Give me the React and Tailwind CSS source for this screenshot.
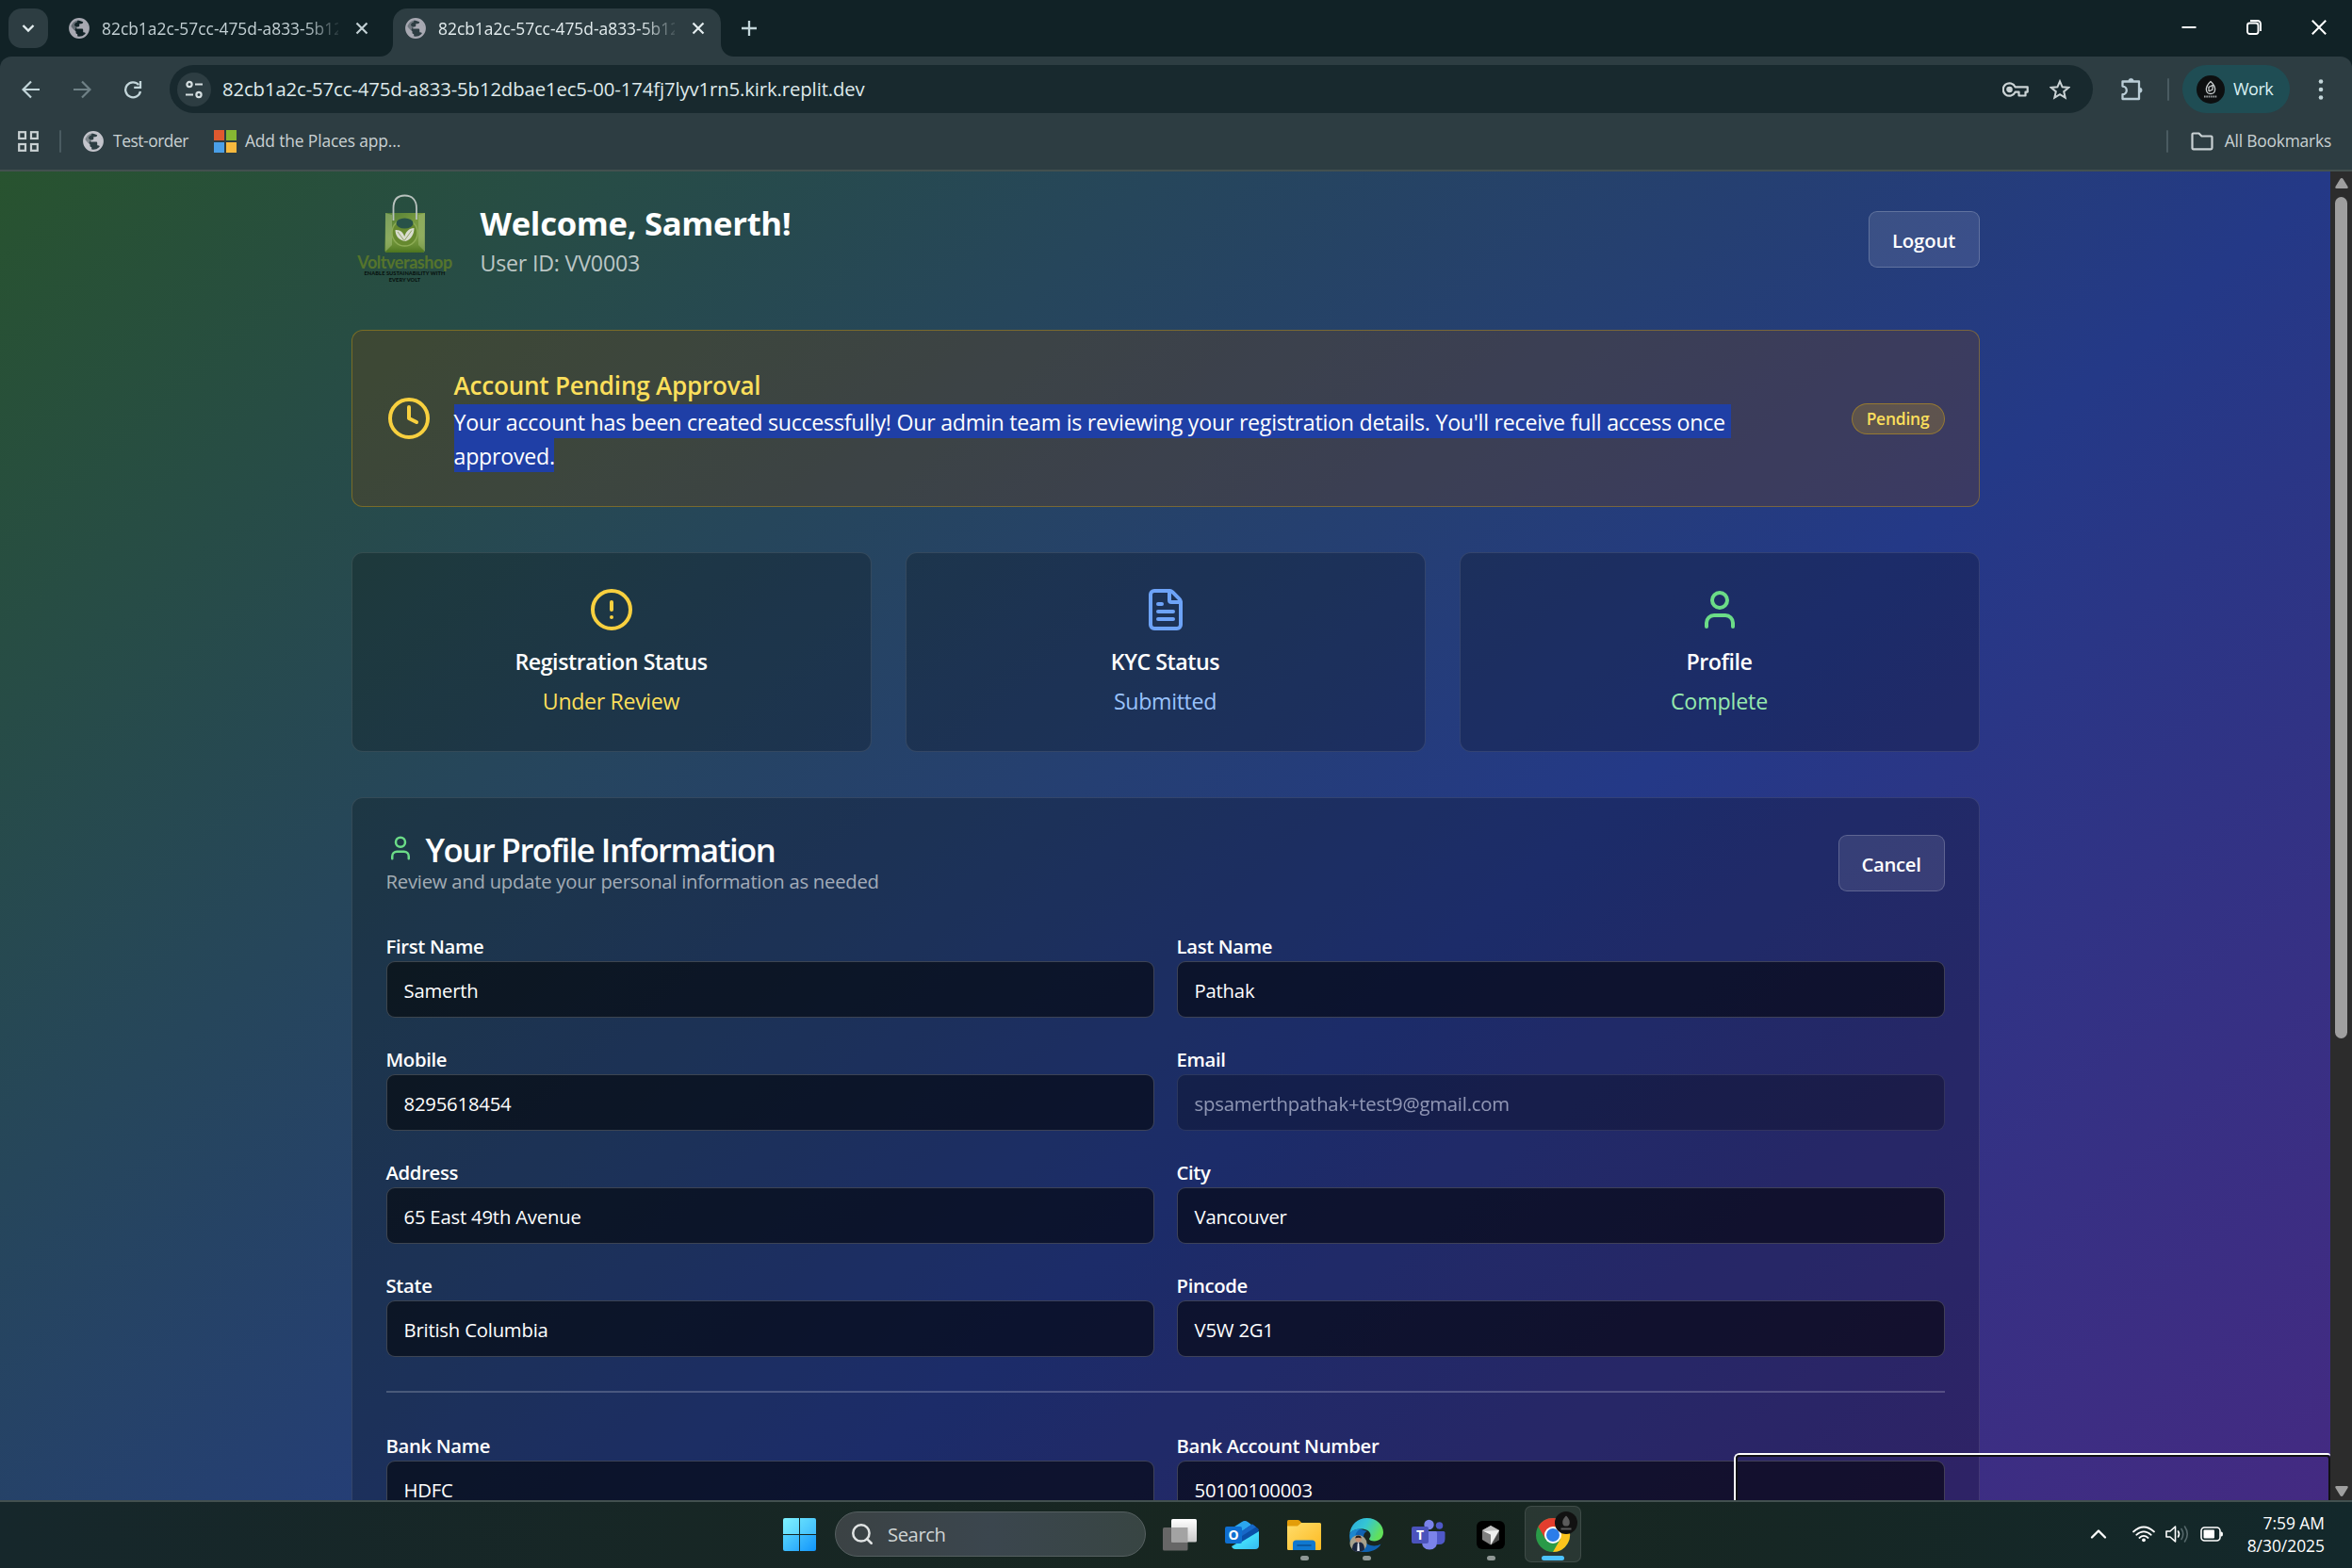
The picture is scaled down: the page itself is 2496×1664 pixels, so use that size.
import React from "react";
import { Clock, CircleAlert, FileText, User, Search, ChevronUp } from "lucide-react";

/* ---------- browser icons ---------- */

function Globe({ className = "" }) {
  return (
    <svg viewBox="0 0 22 22" className={`h-[22px] w-[22px] shrink-0 ${className}`}>
      <circle cx="11" cy="11" r="9.8" fill="none" stroke="currentColor" strokeWidth="2.2" />
      <path
        fill="currentColor"
        d="M2 9 L7.5 14.2 V15.6 C7.5 16.6 8.3 17.2 9.2 17.2 V20 C4.5 19.6 1 15.500 1 11 Z M9 2 C13 1 17 3 19 6.500 C21 10 20.500 14 18.500 17 C18 16 17 15.300 16 15.300 H15.200 V12.700 C15.200 12 14.700 11.600 14 11.600 H8.300 V9.400 H10.200 C10.800 9.400 11.300 8.900 11.300 8.300 V6.300 H13.200 C14.300 6.300 15.200 5.400 15.200 4.300 Z"
      />
      <path fill="currentColor" d="M1.500 9.500 C2 5 5.500 1.800 9.500 1.400 L9 4.500 C7 5 6 6 6 8 L8 9.500 L6.500 13 Z" opacity=".55" />
    </svg>
  );
}

function CloseX({ className = "" }) {
  return (
    <svg viewBox="0 0 14 14" className={`h-[14px] w-[14px] ${className}`} stroke="currentColor" strokeWidth="2.2" fill="none">
      <path d="M1.500 1.500 12.500 12.500M12.500 1.500 1.500 12.500" />
    </svg>
  );
}

function TabTitle({ className = "" }) {
  return (
    <span
      className={`ml-[13px] w-[251px] overflow-hidden whitespace-nowrap text-[17.4px] leading-[24px] [mask-image:linear-gradient(to_right,black_86%,transparent_102%)] ${className}`}
    >
      82cb1a2c-57cc-475d-a833-5b12
    </span>
  );
}

function TabStrip() {
  return (
    <div className="flex h-[60px] bg-[#112226] text-[#c3d0d4]">
      <div className="ml-[9px] mt-[9px] flex h-[42px] w-[42px] items-center justify-center rounded-[14px] bg-[#2d3d42]">
        <svg viewBox="0 0 14 10" className="h-[10px] w-[14px]" fill="none" stroke="#e4eef0" strokeWidth="2.4">
          <path d="M1.500 2 7 7.500 12.500 2" />
        </svg>
      </div>
      <div className="ml-[22px] flex h-[60px] w-[330px] items-center">
        <Globe className="text-[#a8a9b2]" />
        <TabTitle />
        <CloseX className="ml-[18px]" />
      </div>
      <svg viewBox="0 0 14 14" className="h-[14px] w-[14px] self-end fill-[#2d3d42]">
        <path d="M14 0V14H0C8 14 14 8 14 0Z" />
      </svg>
      <div className="mt-[9px] flex h-[51px] w-[348px] items-center rounded-t-[15px] bg-[#2d3d42] pb-[9px] pl-[13px] text-[#e3ecee]">
        <Globe className="text-[#a8a9b2]" />
        <TabTitle />
        <CloseX className="ml-[18px]" />
      </div>
      <svg viewBox="0 0 14 14" className="h-[14px] w-[14px] self-end fill-[#2d3d42]">
        <path d="M0 0V14H14C6 14 0 8 0 0Z" />
      </svg>
      <svg viewBox="0 0 16 16" className="ml-[8px] mt-[22px] h-[16px] w-[16px]" stroke="#c3d6da" strokeWidth="2.300">
        <path d="M8 0V16M0 8H16" />
      </svg>
      <div className="ml-auto mr-[27px] flex h-[58px] items-center gap-[53px] text-white">
        <svg viewBox="0 0 16 16" className="h-[16px] w-[16px]" stroke="currentColor" strokeWidth="2">
          <path d="M0.500 8H15.500" />
        </svg>
        <svg viewBox="0 0 16 16" className="h-[16px] w-[16px]" fill="none" stroke="currentColor" strokeWidth="1.900">
          <rect x="1" y="3.500" width="11.500" height="11.500" rx="2.500" />
          <path d="M4 1H11.500Q15 1 15 4.500V12" />
        </svg>
        <svg viewBox="0 0 16 16" className="h-[16px] w-[16px]" stroke="currentColor" strokeWidth="2">
          <path d="M0.800 0.800 15.200 15.200M15.200 0.800 0.800 15.200" />
        </svg>
      </div>
    </div>
  );
}

function Toolbar() {
  return (
    <div className="bg-[#112226]">
      <div className="flex h-[69px] items-center rounded-t-[12px] bg-[#2d3d42] text-[#c3d6da]">
        <svg viewBox="0 0 20 20" className="ml-[23px] h-[20px] w-[20px]" fill="none" stroke="currentColor" strokeWidth="2.200">
          <path d="M19 10H2M10 1.500 1.500 10 10 18.500" />
        </svg>
        <svg viewBox="0 0 20 20" className="ml-[34px] h-[20px] w-[20px] text-[#6f8186]" fill="none" stroke="currentColor" strokeWidth="2.200">
          <path d="M1 10H18M10 1.500 18.500 10 10 18.500" />
        </svg>
        <svg viewBox="0 0 20 20" className="ml-[34px] h-[20px] w-[20px]" fill="none" stroke="currentColor" strokeWidth="2.300">
          <path d="M16.200 5A8 8 0 1 0 18 12" />
          <path d="M18 1V7.800H11.200" />
        </svg>
        <div className="ml-[29px] flex h-[51px] w-[2041px] items-center rounded-full bg-[#18292e]">
          <div className="ml-[8px] flex h-[36px] w-[36px] items-center justify-center rounded-full bg-[#2d3d42]">
            <svg viewBox="0 0 20 20" className="h-[20px] w-[20px]" fill="none" stroke="#d5dee0" strokeWidth="2.200">
              <circle cx="5" cy="4.500" r="2.600" />
              <path d="M11 4.500H19M1 15.500H9" />
              <circle cx="15" cy="15.500" r="2.600" />
            </svg>
          </div>
          <span className="mb-[2px] ml-[12px] whitespace-nowrap text-[20.3px] leading-[30px] tracking-[-0.1px] text-[#dfe9eb]">
            82cb1a2c-57cc-475d-a833-5b12dbae1ec5-00-174fj7lyv1rn5.kirk.replit.dev
          </span>
          <svg viewBox="0 0 28 16" className="ml-auto mr-[22px] h-[16px] w-[28px]" fill="none" stroke="#cbd3d5" strokeWidth="2.200">
            <path d="M13.600 5.400A6.700 6.700 0 1 0 13.600 10.600H17.500V14.500H24.500V10.600H26.700V5.400Z" strokeLinejoin="round" />
            <circle cx="7.500" cy="8" r="2.200" fill="#cbd3d5" />
          </svg>
          <svg viewBox="0 0 22 22" className="mr-[24px] h-[22px] w-[22px]" fill="none" stroke="#cbd3d5" strokeWidth="2">
            <path d="M11 2.300 13.600 8.300 20.200 8.900 15.200 13.200 16.700 19.600 11 16.200 5.300 19.600 6.800 13.200 1.800 8.900 8.400 8.300Z" />
          </svg>
        </div>
        <svg viewBox="0 0 26 26" className="-mt-[2px] ml-[28px] h-[26px] w-[26px]" fill="none" stroke="#b9cdd6" strokeWidth="2.300" strokeLinejoin="round">
          <path d="M3.500 5.500H21V24H3.500V19.200A4.300 4.300 0 0 0 3.500 10.600Z" />
          <path d="M9.800 5A2.700 2.700 0 0 1 15.200 5ZM21.500 12A2.700 2.700 0 0 1 21.500 17.400Z" fill="#b9cdd6" strokeWidth="0.500" />
        </svg>
        <div className="ml-[25px] h-[24px] w-[2px] rounded bg-[#4a5b61]" />
        <div className="ml-[14px] flex h-[51px] w-[114px] items-center rounded-full bg-[#1f4d54]">
          <svg viewBox="0 0 30 30" className="ml-[15px] h-[30px] w-[30px]">
            <circle cx="15" cy="15" r="15" fill="#0d0f10" />
            <path d="M15 6.500C11 10 10 13 10.500 16S13 19.500 15 19.500 19 19 19.500 16 19 10 15 6.500ZM13 17V12.500L17 10.500V15L13 17" fill="none" stroke="#c9cdce" strokeWidth="1.300" />
            <path d="M8 22.500H22" stroke="#9b9fa0" strokeWidth="2" strokeDasharray="1.600 .7" />
          </svg>
          <span className="mb-px ml-[9px] text-[18px] leading-[28px] tracking-[-0.5px] text-[#d9f0f3]">Work</span>
        </div>
        <svg viewBox="0 0 6 22" className="ml-[30px] h-[22px] w-[6px] fill-[#c3d6da]">
          <circle cx="3" cy="2.500" r="2.300" />
          <circle cx="3" cy="11" r="2.300" />
          <circle cx="3" cy="19.500" r="2.300" />
        </svg>
      </div>
    </div>
  );
}

function BookmarksBar() {
  return (
    <div className="flex h-[53px] items-center border-b-2 border-[#43504f] bg-[#2d3d42] pb-[9px] text-[17.4px] leading-[24px] text-[#c9d1d3]">
      <svg viewBox="0 0 22 22" className="ml-[19px] h-[22px] w-[22px]" fill="none" stroke="#c9d1d3" strokeWidth="2.200">
        <rect x="1.200" y="1.200" width="6.800" height="6.800" />
        <rect x="14" y="1.200" width="6.800" height="6.800" />
        <rect x="1.200" y="14" width="6.800" height="6.800" />
        <rect x="14" y="14" width="6.800" height="6.800" />
      </svg>
      <div className="ml-[22px] h-[24px] w-[2px] rounded bg-[#4a5b61]" />
      <Globe className="ml-[23px] text-[#c3c4cb]" />
      <span className="mb-[2px] ml-[10px] w-[81px] whitespace-nowrap tracking-[-0.45px]">Test-order</span>
      <div className="ml-[26px] grid h-[24px] w-[24px] grid-cols-2 gap-[2px]">
        <div className="bg-[#e0592f]" />
        <div className="bg-[#86b732]" />
        <div className="bg-[#4a9fe8]" />
        <div className="bg-[#f7b93e]" />
      </div>
      <span className="mb-[2px] ml-[9px] whitespace-nowrap tracking-[-0.14px]">Add the Places app...</span>
      <div className="ml-auto h-[24px] w-[2px] rounded bg-[#4a5b61]" />
      <svg viewBox="0 0 24 20" className="ml-[24px] h-[20px] w-[24px]" fill="none" stroke="#c9d1d3" strokeWidth="2.200" strokeLinejoin="round">
        <path d="M1.500 17V2.500Q1.500 1.500 2.500 1.500H8.500L11.500 4.500H21.500Q22.500 4.500 22.500 5.500V17Q22.500 18.300 21.200 18.300H2.800Q1.500 18.300 1.500 17Z" />
      </svg>
      <span className="mb-[2px] ml-[12px] mr-[22px] whitespace-nowrap tracking-[-0.2px]">All Bookmarks</span>
    </div>
  );
}

/* ---------- page ---------- */

function ShopLogo() {
  return (
    <div className="flex h-[96px] w-[114px] flex-col items-center">
      <svg viewBox="0 0 46 64" className="h-[64px] w-[46px]">
        <defs>
          <linearGradient id="bag" x1="0" y1="0" x2="1" y2="1">
            <stop offset="0" stopColor="#4d7a35" />
            <stop offset=".45" stopColor="#76993f" />
            <stop offset="1" stopColor="#7d9d48" />
          </linearGradient>
          <linearGradient id="bagBase" x1="0" y1="0" x2="0" y2="1">
            <stop offset="0" stopColor="#6d9434" stopOpacity="0" />
            <stop offset="1" stopColor="#4c741e" />
          </linearGradient>
        </defs>
        <path d="M2 20H44L43.500 60Q43.500 62 41.500 62H3.500Q1.500 62 1.500 60Z" fill="url(#bag)" />
        <path d="M2 44H44L43.500 60Q43.500 62 41.500 62H3.500Q1.500 62 1.500 60Z" fill="url(#bagBase)" />
        <path d="M2 61 9 54V22L2 20Z" fill="#b9cf95" opacity=".4" />
        <path d="M44 61 37 54V22L44 20Z" fill="#c3d6a0" opacity=".3" />
        <ellipse cx="22.500" cy="41" rx="13.500" ry="14" fill="#66892f" stroke="#8dac55" strokeWidth="1.500" />
        <ellipse cx="22.500" cy="31" rx="9" ry="5.500" fill="#285248" />
        <path d="M22 50C15 48 12.500 43 12.500 38 18 37.500 21 41 22.300 45 23.500 40 27 36 32.500 36 32.500 43 29 48.500 23 50Z" fill="#d9dccf" />
        <path d="M15 40 22 49.500 30 38.500" fill="none" stroke="#8ba05f" strokeWidth=".9" />
        <path d="M10.500 28V15C10.500 6 15 1.500 22.500 1.500S35 6 35 15V27" fill="none" stroke="#b9c2be" strokeWidth="1.800" />
      </svg>
      <span className="mt-[-2px] whitespace-nowrap font-['Lato'] text-[18px] font-bold leading-[20px] tracking-[-0.450px] text-[#55742c]">
        Voltverashop
      </span>
      <span className="mt-[-1px] whitespace-nowrap text-center font-['Lato'] text-[5.600px] font-black leading-[6.500px] tracking-[0.100px] text-[#07120f]">
        ENABLE SUSTAINABILITY WITH
        <br />
        EVERY VOLT
      </span>
    </div>
  );
}

function StatusCard({ icon: Icon, iconClass, title, titleClass, status, statusClass }) {
  return (
    <div className="flex h-[212px] flex-col items-center rounded-xl border border-white/10 bg-black/22 pt-9">
      <Icon className={`h-12 w-12 ${iconClass}`} strokeWidth={2} />
      <h3 className={`mt-[13px] text-[23.200px] font-semibold leading-[36px] text-white ${titleClass}`}>{title}</h3>
      <p className={`mt-[6px] text-[23.200px] leading-[36px] ${statusClass}`}>{status}</p>
    </div>
  );
}

function Field({ label, value, disabled }) {
  return (
    <div>
      <div className="h-9 whitespace-nowrap pt-[2px] text-[20.300px] font-semibold leading-[36px] tracking-[-0.330px] text-white">{label}</div>
      <div
        className={`flex h-[60px] items-center whitespace-nowrap rounded-[9px] border border-white/20 bg-black/55 px-[18px] pt-[2px] text-[20.300px] leading-[30px] tracking-[-0.200px] text-white ${disabled ? "opacity-50" : ""}`}
      >
        {value}
      </div>
    </div>
  );
}

const fields = [
  ["First Name", "Samerth"],
  ["Last Name", "Pathak"],
  ["Mobile", "8295618454"],
  ["Email", "spsamerthpathak+test9@gmail.com", true],
  ["Address", "65 East 49th Avenue"],
  ["City", "Vancouver"],
  ["State", "British Columbia"],
  ["Pincode", "V5W 2G1"],
];

const bankFields = [
  ["Bank Name", "HDFC"],
  ["Bank Account Number", "50100100003"],
];

function FieldGrid({ items }) {
  return (
    <div className="grid grid-cols-2 gap-6">
      {items.map(([label, value, disabled]) => (
        <Field key={label} label={label} value={value} disabled={disabled} />
      ))}
    </div>
  );
}

function Page() {
  return (
    <div className="relative flex min-h-0 flex-1 overflow-hidden">
      <main className="h-[2170px] w-[2473px] shrink-0 bg-linear-to-br/srgb from-[#28532f] via-[#243987] to-[#55227f] pt-6">
        <div className="mx-auto w-[1728px]">
          <header className="flex items-center justify-between">
            <div className="flex items-center gap-[23px]">
              <ShopLogo />
              <div className="pt-[1px]">
                <h1 className="text-[34.700px] font-bold leading-[48px] tracking-[-0.330px] text-white">Welcome, Samerth!</h1>
                <p className="text-[23.200px] leading-[36px] tracking-[-0.200px] text-white/70">User ID: VV0003</p>
              </div>
            </div>
            <button className="flex h-[60px] w-[118px] items-center justify-center rounded-[9px] border border-white/20 bg-white/10 pt-[2px] text-[20.300px] font-semibold tracking-[-0.150px] text-white">
              Logout
            </button>
          </header>

          <section className="mt-12 flex h-[188px] items-center rounded-xl border border-[#eab308]/35 bg-[#713f12]/30 px-9">
            <Clock className="h-12 w-12 shrink-0 text-[#f8d03f]" strokeWidth={2} />
            <div className="ml-6 w-[1400px]">
              <h2 className="h-[42px] pt-[1px] text-[26.100px] font-semibold leading-[42px] tracking-[-0.240px] text-[#fbdf5b]">
                Account Pending Approval
              </h2>
              <p className="h-[72px] whitespace-nowrap text-[23.200px] leading-[36px] tracking-[-0.255px] text-white">
                <span className="block h-[36px] w-[1355px] bg-[#1f3fa6] pt-px">
                  Your account has been created successfully! Our admin team is reviewing your registration details. You'll receive full access once
                </span>
                <span className="block h-[36px] w-[106px] bg-[#1f3fa6] pt-px">approved.</span>
              </p>
            </div>
            <span className="ml-auto flex h-[33px] w-[99px] items-center justify-center rounded-full border border-[#eab308]/40 bg-[#eab308]/20 pt-px text-[17.400px] font-semibold tracking-[-0.200px] text-[#fbdf5b]">
              Pending
            </span>
          </section>

          <section className="mt-12 grid grid-cols-3 gap-9">
            <StatusCard
              icon={CircleAlert}
              iconClass="text-[#f8d03f]"
              title="Registration Status"
              titleClass="tracking-[-0.440px]"
              status="Under Review"
              statusClass="tracking-[-0.360px] text-[#fbdf5b]"
            />
            <StatusCard
              icon={FileText}
              iconClass="text-[#6da3f8]"
              title="KYC Status"
              titleClass="tracking-[-0.440px]"
              status="Submitted"
              statusClass="tracking-[-0.360px] text-[#99c2fb]"
            />
            <StatusCard
              icon={User}
              iconClass="text-[#6bdc87]"
              title="Profile"
              titleClass="tracking-[-0.440px]"
              status="Complete"
              statusClass="tracking-[-0.150px] text-[#95e9ae]"
            />
          </section>

          <section className="mt-12 h-[1100px] rounded-xl border border-white/10 bg-black/22 px-9 pt-9">
            <div className="flex h-[67px] items-center justify-between">
              <div>
                <div className="flex items-center gap-3">
                  <User className="-mt-[4px] h-[30px] w-[30px] text-[#6bdc87]" strokeWidth={2} />
                  <h2 className="text-[34.700px] font-semibold leading-[36px] tracking-[-1.520px] text-white">Your Profile Information</h2>
                </div>
                <p className="text-[20.300px] leading-[30px] tracking-[-0.250px] text-white/60">
                  Review and update your personal information as needed
                </p>
              </div>
              <button className="mb-px flex h-[60px] w-[113px] items-center justify-center rounded-[9px] border border-white/20 bg-white/10 pt-[2px] text-[20.300px] font-semibold tracking-[-0.300px] text-white">
                Cancel
              </button>
            </div>
            <div className="mt-[34px]">
              <FieldGrid items={fields} />
            </div>
            <div className="my-9 h-[2px] bg-white/20" />
            <FieldGrid items={bankFields} />
          </section>
        </div>
      </main>

      <div className="flex w-[23px] flex-col items-center bg-[#2c2c2c]">
        <svg viewBox="0 0 14 11" className="mt-[7px] h-[11px] w-[14px] shrink-0 fill-[#9f9f9f]">
          <path d="M7 0Q8 0 8.600 1L13.500 9Q14.300 11 12.500 11H1.500Q-.3 11 .5 9L5.400 1Q6 0 7 0Z" />
        </svg>
        <div className="mt-[9px] h-[893px] w-[13px] shrink-0 rounded-full bg-[#9f9f9f]" />
        <svg viewBox="0 0 14 11" className="mb-[4px] mt-auto h-[11px] w-[14px] shrink-0 rotate-180 fill-[#9f9f9f]">
          <path d="M7 0Q8 0 8.600 1L13.500 9Q14.300 11 12.500 11H1.500Q-.3 11 .5 9L5.400 1Q6 0 7 0Z" />
        </svg>
      </div>

      {/* focus frame hanging over the lower right corner of the page */}
      <div className="absolute -bottom-4 left-[1840px] h-[66px] w-[633px] rounded-tl-[6px] rounded-tr-[3px] border-l-2 border-t-2 border-white">
        <div className="h-full w-full rounded-[4px] border-2 border-[#111114]" />
      </div>
    </div>
  );
}

/* ---------- taskbar ---------- */

function TaskItem({ children, running, active }) {
  return (
    <div className="flex h-full w-[66px] justify-center">
      <div
        className={`mt-[4px] flex h-[60px] w-[60px] flex-col items-center rounded-[7px] border pt-[11px] ${active ? "border-white/10 bg-white/8" : "border-transparent"}`}
      >
        <div className="flex h-[37px] items-center">{children}</div>
        {running && <div className="mt-[4px] h-[5px] w-[9px] rounded-full bg-[#8f9795]" />}
        {active && <div className="mt-[4px] h-[5px] w-[24px] rounded-full bg-[#4cc2ff]" />}
      </div>
    </div>
  );
}

function TaskViewIcon() {
  return (
    <svg viewBox="0 0 36 36" className="h-9 w-9">
      <defs>
        <linearGradient id="tvA" x1="0" y1="0" x2="0" y2="1">
          <stop offset="0" stopColor="#fff" />
          <stop offset="1" stopColor="#c9c9c9" />
        </linearGradient>
      </defs>
      <rect x="0" y="10" width="26.500" height="24.500" rx="1.500" fill="#666" />
      <rect x="9" y="1" width="27" height="24.500" rx="1.500" fill="url(#tvA)" />
      <rect x="9" y="10" width="17.500" height="15.500" fill="#a3a3a3" />
    </svg>
  );
}

function OutlookIcon() {
  return (
    <svg viewBox="0 0 36 36" className="h-9 w-9">
      <defs>
        <linearGradient id="olA" x1="0" y1="0" x2="1" y2="1">
          <stop offset="0" stopColor="#1a8fe0" />
          <stop offset=".5" stopColor="#42dcfb" />
          <stop offset="1" stopColor="#35b8f1" />
        </linearGradient>
      </defs>
      <path d="M7 14 19 4Q21 2.500 23 4L35 12V20H7Z" fill="#1470cc" />
      <path d="M7 11 18 4Q21 2 24 4L28 7 12 18H7Z" fill="#2ba6ee" />
      <path d="M36 14V29Q36 33 32 33H11Q8 33 7 30L29 17Z" fill="url(#olA)" />
      <path d="M29 6.500 35 11Q37 13 34.500 15L18 25V14Z" fill="#0a4fa8" />
      <path d="M18 14 29 6.500 33 9.500 18 19Z" fill="#1768c8" />
      <rect x="0" y="9" width="18" height="18" rx="2" fill="#0f6fd0" />
      <text x="9" y="23.300" textAnchor="middle" fontSize="14" fontWeight="700" fontFamily="Open Sans, sans-serif" fill="#fff">O</text>
    </svg>
  );
}

function FolderIcon() {
  return (
    <svg viewBox="0 0 36 36" className="h-9 w-9">
      <defs>
        <linearGradient id="fdA" x1="0" y1="0" x2="1" y2="1">
          <stop offset="0" stopColor="#ffdd6b" />
          <stop offset="1" stopColor="#fdba22" />
        </linearGradient>
      </defs>
      <path d="M0 3.500Q0 2 1.500 2H11Q12.500 2 13.500 3L16 6V12H0Z" fill="#e39d0a" />
      <path d="M0 8.500H11L15 5H34.500Q36 5 36 6.500V32.500Q36 34 34.500 34H1.500Q0 34 0 32.500Z" fill="url(#fdA)" />
      <path d="M6 34V27Q6 23.500 9.500 23.500H26.500Q30 23.500 30 27V34Z" fill="#0f78d0" />
      <path d="M11 29H25" stroke="#0a4f92" strokeWidth="1.600" strokeLinecap="round" />
    </svg>
  );
}

function EdgeIcon() {
  return (
    <svg viewBox="0 0 36 36" className="h-9 w-9">
      <defs>
        <linearGradient id="egA" x1="0" y1="0" x2="1" y2=".4">
          <stop offset="0" stopColor="#2aa7dd" />
          <stop offset=".5" stopColor="#35c6d4" />
          <stop offset="1" stopColor="#62e05a" />
        </linearGradient>
      </defs>
      <path d="M1 22C-1 32 8 37 18 36 26 35.500 31 32 33.500 27.500 28 31 18 30 15.500 23 14 18 16 15 19 14L10 11Q3 13 1 22Z" fill="#0f62b2" />
      <path d="M.3 17C1 7 9 0 18.500 0 29 0 36 7.500 36 15 36 21 31.500 24.500 26.500 24.500 23 24.500 21 23.500 21 22.300 21 21.500 22.500 20.500 22.500 18.300 22.500 14 18 11.500 12.500 11.500 6 11.500 1.500 14 .3 17Z" fill="url(#egA)" />
      <path d="M.3 17C2 13 6.500 11.500 12 11.500 7 14 5.500 18 6.500 24L.8 24Q-.2 20 .3 17Z" fill="#1c86cf" />
      <circle cx="9.500" cy="27" r="9" fill="#a6a18d" />
      <path d="M3 33.500C3 27 6 25.500 9.500 25.500S16 27 16 33.500Q13 36 9.500 36T3 33.500Z" fill="#1c2740" />
      <path d="M9.500 27 8 25.500H11ZM8.700 27H10.300L10.800 35H8.200Z" fill="#e8ecf2" />
      <circle cx="9.500" cy="22.300" r="3.200" fill="#c48f73" />
      <path d="M6.300 21.500Q6.500 18.500 9.500 18.500T12.700 21.500Q9.500 19.800 6.300 21.500Z" fill="#241a17" />
    </svg>
  );
}

function TeamsIcon() {
  return (
    <svg viewBox="0 0 36 36" className="h-9 w-9">
      <circle cx="29.500" cy="8" r="3.800" fill="#4f58c8" />
      <path d="M25 14H34Q35.500 14 35.500 15.500V22Q35.500 28 29 28H25Z" fill="#4f58c8" />
      <circle cx="18.500" cy="7" r="5.200" fill="#7b83eb" />
      <path d="M11 14H25.500Q27 14 27 15.500V25Q27 33.500 19 33.500T11 25Z" fill="#7b83eb" />
      <rect x="0" y="9" width="18" height="18" rx="2" fill="#4b53bc" />
      <text x="9" y="23" textAnchor="middle" fontSize="14" fontWeight="700" fontFamily="Open Sans, sans-serif" fill="#fff">T</text>
    </svg>
  );
}

function CubeIcon() {
  return (
    <svg viewBox="0 0 30 30" className="h-[30px] w-[30px]">
      <rect width="30" height="30" rx="6" fill="#000" />
      <path d="M15 5 24 10V20L15 25.500 6 20V10Z" fill="#7f7f7f" />
      <path d="M6 10 15 5 24 10 15 14.500Z" fill="#c2c2c2" />
      <path d="M24 10 15 25.500V14.500L7.500 11Z" fill="#f0f0f0" />
      <path d="M24 11V20L16 25Z" fill="#4a4a4a" />
    </svg>
  );
}

function ChromeIcon() {
  return (
    <svg viewBox="0 0 46 46" className="-mt-[8px] ml-[10px] h-[46px] w-[46px]">
      <circle cx="18" cy="27" r="18" fill="#2a9a48" />
      <path d="M2.400 18A18 18 0 0 1 33.600 18H18L10.200 31.500Z" fill="#e33e2e" />
      <path d="M33.600 18A18 18 0 0 1 18 45L25.800 31.500 18 18Z" fill="#fcc41c" />
      <circle cx="18" cy="27" r="9" fill="#fff" />
      <circle cx="18" cy="27" r="7" fill="#2b7de9" />
      <circle cx="32" cy="14" r="12" fill="#111" />
      <path d="M32 6.500C28.500 10 28 12 28.300 14.500S30 17.500 32 17.500 35.500 17 35.700 14.500 35.500 10 32 6.500Z" fill="#5b5b5b" />
      <path d="M26.500 20.500H37.500" stroke="#5b5b5b" strokeWidth="2" />
    </svg>
  );
}

function Taskbar() {
  return (
    <div className="flex h-[72px] items-start border-t-2 border-[#42504f] bg-linear-to-r from-[#16272b] via-[#18261f] via-58% to-[#13282b]">
      <div className="ml-[831px] mt-[17px] grid h-[35px] w-[35px] grid-cols-2 gap-[1.500px]">
        <div className="rounded-tl-[2px] bg-linear-to-br from-[#7df1ff] to-[#5cd5fd]" />
        <div className="rounded-tr-[2px] bg-linear-to-br from-[#62dcfd] to-[#3fbcfd]" />
        <div className="rounded-bl-[2px] bg-linear-to-br from-[#52d2fd] to-[#2ba9fc]" />
        <div className="rounded-br-[2px] bg-linear-to-br from-[#3cbcfd] to-[#0f95fb]" />
      </div>
      <div className="ml-[20px] mt-[10px] flex h-[48px] w-[330px] items-center rounded-full border border-[#566061] bg-linear-to-r from-[#3b4244] via-[#3b464e] to-[#384543]">
        <Search className="ml-[15px] h-[26px] w-[26px] text-[#e1e4e4]" strokeWidth={2.3} />
        <span className="mb-px ml-[14px] text-[20.300px] leading-[30px] tracking-[-0.450px] text-[#cfd4d4]">Search</span>
      </div>
      <div className="ml-[3px] flex h-[70px]">
        <TaskItem><TaskViewIcon /></TaskItem>
        <TaskItem><OutlookIcon /></TaskItem>
        <TaskItem running><FolderIcon /></TaskItem>
        <TaskItem running><EdgeIcon /></TaskItem>
        <TaskItem><TeamsIcon /></TaskItem>
        <TaskItem running><CubeIcon /></TaskItem>
        <TaskItem active><ChromeIcon /></TaskItem>
      </div>
      <div className="ml-auto flex h-[68px] items-center text-white">
        <ChevronUp className="h-[28px] w-[28px]" strokeWidth={2} />
        <svg viewBox="0 0 24 18" className="ml-[22px] h-[18px] w-[24px]" fill="none" stroke="currentColor" strokeWidth="1.700" strokeLinecap="round">
          <path d="M1 6.500Q12-3.500 23 6.500M4.200 9.800Q12 2.800 19.800 9.800M7.400 13Q12 8.800 16.600 13" />
          <circle cx="12" cy="15.300" r="1.900" fill="currentColor" stroke="none" />
        </svg>
        <svg viewBox="0 0 25 20" className="ml-[11px] h-[20px] w-[25px]" fill="none" stroke="currentColor" strokeWidth="1.600" strokeLinecap="round" strokeLinejoin="round">
          <path d="M1 7H5L10.500 2V18L5 13H1Z" />
          <path d="M13.500 7Q15.500 10 13.500 13" />
          <path d="M17 4.500Q20.500 10 17 15.500M20.500 2Q26 10 20.500 18" stroke="#56686b" />
        </svg>
        <svg viewBox="0 0 25 16" className="ml-[12px] h-[16px] w-[25px]" fill="none" stroke="currentColor" strokeWidth="1.600">
          <rect x="1" y="1" width="20" height="14" rx="3.500" />
          <rect x="3.500" y="3.500" width="11.500" height="9" rx="1" fill="currentColor" stroke="none" />
          <path d="M21.500 5.500H22.500Q24 5.500 24 8T22.500 10.500H21.500Z" fill="currentColor" stroke="none" />
        </svg>
        <div className="ml-[23px] mr-[29px] w-[84px] whitespace-nowrap text-right text-[17.400px] leading-[24px]">
          <div>7:59 AM</div>
          <div>8/30/2025</div>
        </div>
      </div>
    </div>
  );
}

export default function App() {
  return (
    <div className="flex h-screen w-[2496px] flex-col overflow-hidden font-['Open_Sans','Noto_Sans',sans-serif]">
      <TabStrip />
      <Toolbar />
      <BookmarksBar />
      <Page />
      <Taskbar />
    </div>
  );
}
